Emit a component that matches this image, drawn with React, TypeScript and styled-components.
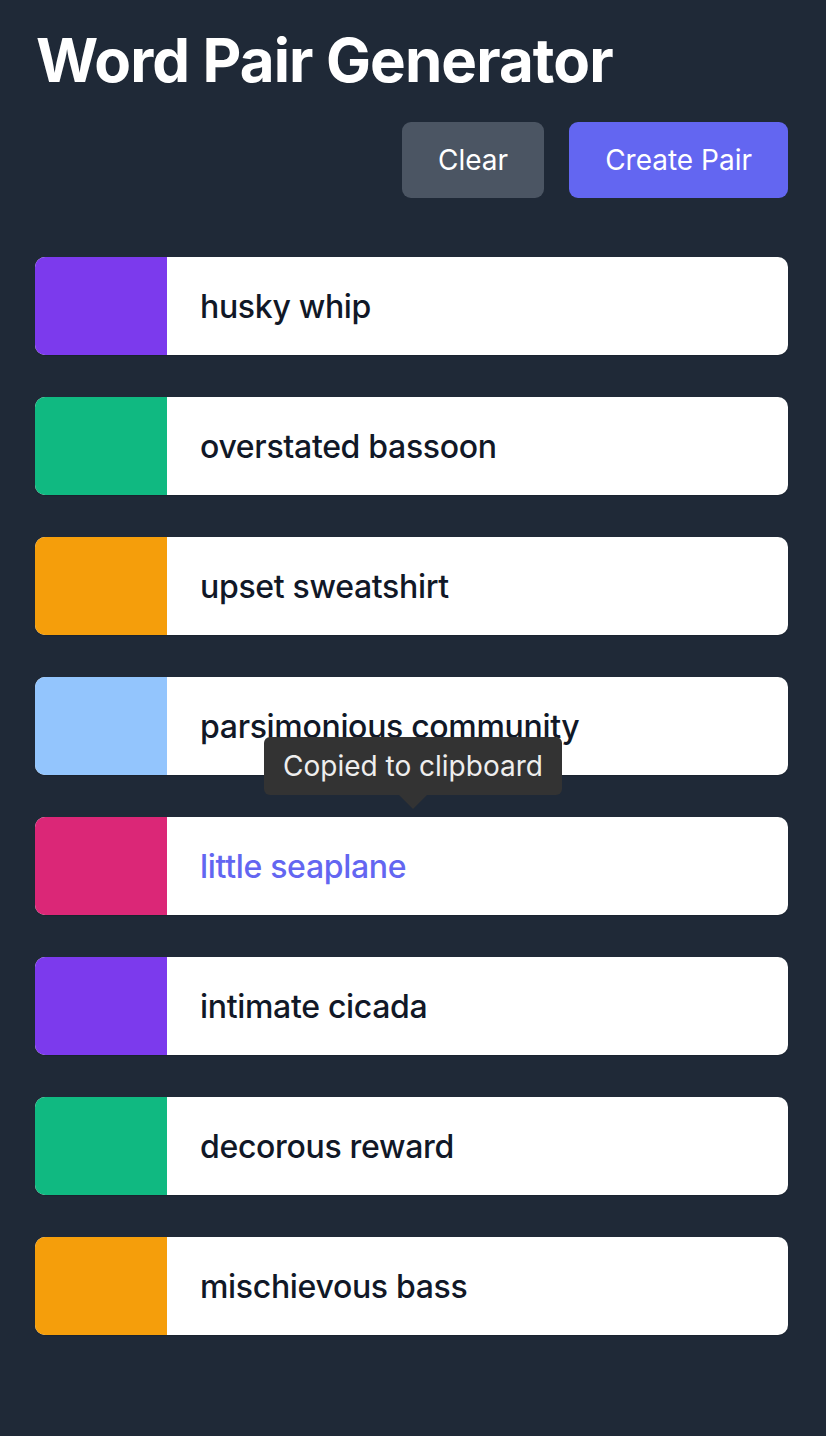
import styled, { createGlobalStyle } from "styled-components";

const GlobalStyle = createGlobalStyle`
  html, body {
    margin: 0;
    padding: 0;
    background: #1f2937;
  }
  body {
    font-family: Inter, "Noto Sans", sans-serif;
  }
`;

const Page = styled.div`
  min-height: 1436px;
  padding: 24px 38px 0 35px;
  box-sizing: border-box;
`;

const Title = styled.h1`
  margin: 0 0 0 1px;
  font-size: 60px;
  line-height: 72px;
  font-weight: 700;
  letter-spacing: -0.015em;
  color: #ffffff;
`;

const Toolbar = styled.div`
  display: flex;
  justify-content: flex-end;
  gap: 25px;
  margin-top: 26px;
`;

const Button = styled.button<{ $variant: "muted" | "primary" }>`
  height: 76px;
  padding: 0 36px;
  border: none;
  border-radius: 9px;
  font-family: Inter, "Noto Sans", sans-serif;
  font-size: 28px;
  color: #ffffff;
  cursor: pointer;
  background: ${({ $variant }) => ($variant === "primary" ? "#6366f1" : "#4b5563")};
`;

const List = styled.ul`
  list-style: none;
  margin: 59px 0 0;
  padding: 0;
  display: flex;
  flex-direction: column;
  gap: 42px;
`;

const Item = styled.li`
  position: relative;
  display: flex;
  height: 98px;
  background: #ffffff;
  border-radius: 10px;
  box-shadow: 0 1px 1px rgba(0, 0, 0, 0.15);
`;

const Swatch = styled.span<{ $color: string }>`
  width: 132px;
  flex-shrink: 0;
  background: ${({ $color }) => $color};
  border-radius: 10px 0 0 10px;
`;

const Words = styled.span<{ $active?: boolean }>`
  display: flex;
  align-items: center;
  padding-left: 33px;
  font-size: 32px;
  font-weight: 500;
  letter-spacing: -0.01em;
  color: ${({ $active }) => ($active ? "#6366f1" : "#111827")};
`;

const Tooltip = styled.div`
  position: absolute;
  left: 229px;
  bottom: calc(100% + 22px);
  padding: 0 19px;
  height: 58px;
  display: flex;
  align-items: center;
  background: #333333;
  color: #eeeeee;
  font-size: 28px;
  border-radius: 6px;
  white-space: nowrap;
  z-index: 2;

  &::after {
    content: "";
    position: absolute;
    left: 50%;
    top: 100%;
    margin-left: -14px;
    border: 14px solid transparent;
    border-top-color: #333333;
    border-bottom: none;
  }
`;

type Pair = { words: string; color: string };

const pairs: Pair[] = [
  { words: "husky whip", color: "#7c3aed" },
  { words: "overstated bassoon", color: "#10b981" },
  { words: "upset sweatshirt", color: "#f59e0b" },
  { words: "parsimonious community", color: "#93c5fd" },
  { words: "little seaplane", color: "#db2777" },
  { words: "intimate cicada", color: "#7c3aed" },
  { words: "decorous reward", color: "#10b981" },
  { words: "mischievous bass", color: "#f59e0b" },
];

const copiedIndex = 4;

export default function App() {
  return (
    <>
      <GlobalStyle />
      <Page>
        <Title>Word Pair Generator</Title>
        <Toolbar>
          <Button $variant="muted">Clear</Button>
          <Button $variant="primary">Create Pair</Button>
        </Toolbar>
        <List>
          {pairs.map((pair, i) => (
            <Item key={pair.words}>
              <Swatch $color={pair.color} />
              <Words $active={i === copiedIndex}>{pair.words}</Words>
              {i === copiedIndex && <Tooltip>Copied to clipboard</Tooltip>}
            </Item>
          ))}
        </List>
      </Page>
    </>
  );
}
